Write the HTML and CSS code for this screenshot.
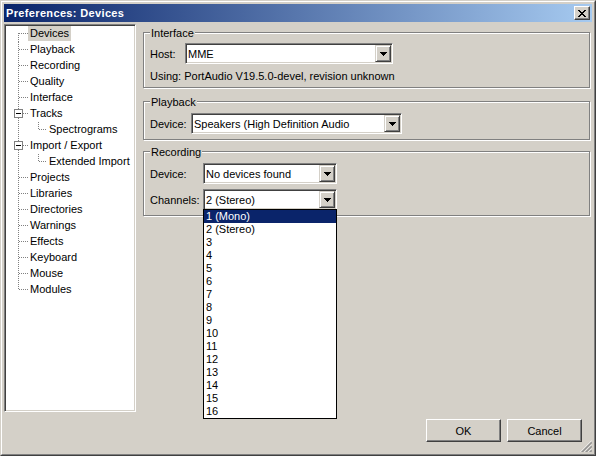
FILE: index.html
```html
<!DOCTYPE html>
<html>
<head>
<meta charset="utf-8">
<title>Preferences: Devices</title>
<link rel="stylesheet" href="styles.css">
</head>
<body>
<div class="window">
  <div class="frame">
    <div class="titlebar">
      <span class="title">Preferences: Devices</span>
      <span class="close"><svg width="8" height="7" viewBox="0 0 8 7" shape-rendering="crispEdges"><path d="M0 0h2v1H0z M6 0h2v1H6z M1 1h2v1H1z M5 1h2v1H5z M2 2h4v1H2z M3 3h2v1H3z M2 4h4v1H2z M1 5h2v1H1z M5 5h2v1H5z M0 6h2v1H0z M6 6h2v1H6z"/></svg></span>
    </div>
    <div class="client">
      <div class="main">
        <div class="tree">
          <div class="row first"><span class="g"></span><span class="t sel">Devices</span></div>
          <div class="row"><span class="g"></span><span class="t">Playback</span></div>
          <div class="row"><span class="g"></span><span class="t">Recording</span></div>
          <div class="row"><span class="g"></span><span class="t">Quality</span></div>
          <div class="row"><span class="g"></span><span class="t">Interface</span></div>
          <div class="row"><span class="g"><span class="box"><span class="minus"></span></span></span><span class="t">Tracks</span></div>
          <div class="row child"><span class="g"></span><span class="t">Spectrograms</span></div>
          <div class="row"><span class="g"><span class="box"><span class="minus"></span></span></span><span class="t">Import / Export</span></div>
          <div class="row child"><span class="g"></span><span class="t">Extended Import</span></div>
          <div class="row"><span class="g"></span><span class="t">Projects</span></div>
          <div class="row"><span class="g"></span><span class="t">Libraries</span></div>
          <div class="row"><span class="g"></span><span class="t">Directories</span></div>
          <div class="row"><span class="g"></span><span class="t">Warnings</span></div>
          <div class="row"><span class="g"></span><span class="t">Effects</span></div>
          <div class="row"><span class="g"></span><span class="t">Keyboard</span></div>
          <div class="row"><span class="g"></span><span class="t">Mouse</span></div>
          <div class="row last"><span class="g"></span><span class="t">Modules</span></div>
        </div>
        <div class="panel">
          <section class="group g-interface">
            <div class="group-title"><span>Interface</span></div>
            <div class="field">
              <span class="label l-host">Host:</span>
              <div class="combo w-host"><span class="value">MME</span><span class="arrow"><svg width="7" height="4" viewBox="0 0 7 4" shape-rendering="crispEdges"><path d="M0 0h7v1H0z M1 1h5v1H1z M2 2h3v1H2z M3 3h1v1H3z"/></svg></span></div>
            </div>
            <div class="info">Using: PortAudio V19.5.0-devel, revision unknown</div>
          </section>
          <section class="group g-playback">
            <div class="group-title"><span>Playback</span></div>
            <div class="field">
              <span class="label l-play">Device:</span>
              <div class="combo w-play"><span class="value">Speakers (High Definition Audio</span><span class="arrow"><svg width="7" height="4" viewBox="0 0 7 4" shape-rendering="crispEdges"><path d="M0 0h7v1H0z M1 1h5v1H1z M2 2h3v1H2z M3 3h1v1H3z"/></svg></span></div>
            </div>
          </section>
          <section class="group g-recording">
            <div class="group-title"><span>Recording</span></div>
            <div class="field">
              <span class="label l-rec">Device:</span>
              <div class="combo w-rec"><span class="value">No devices found</span><span class="arrow"><svg width="7" height="4" viewBox="0 0 7 4" shape-rendering="crispEdges"><path d="M0 0h7v1H0z M1 1h5v1H1z M2 2h3v1H2z M3 3h1v1H3z"/></svg></span></div>
            </div>
            <div class="field gap">
              <span class="label l-rec">Channels:</span>
              <div class="combo w-rec open"><span class="value">2 (Stereo)</span><span class="arrow"><svg width="7" height="4" viewBox="0 0 7 4" shape-rendering="crispEdges"><path d="M0 0h7v1H0z M1 1h5v1H1z M2 2h3v1H2z M3 3h1v1H3z"/></svg></span>
                <ul class="list">
                  <li class="hl">1 (Mono)</li>
                  <li>2 (Stereo)</li>
                  <li>3</li>
                  <li>4</li>
                  <li>5</li>
                  <li>6</li>
                  <li>7</li>
                  <li>8</li>
                  <li>9</li>
                  <li>10</li>
                  <li>11</li>
                  <li>12</li>
                  <li>13</li>
                  <li>14</li>
                  <li>15</li>
                  <li>16</li>
                </ul>
              </div>
            </div>
          </section>
        </div>
      </div>
      <div class="footer">
        <button class="btn">OK</button>
        <button class="btn">Cancel</button>
      </div>
      <svg class="grip" width="12" height="12" viewBox="0 0 12 12">
        <g stroke-width="1">
          <line x1="12" y1="0.5" x2="0.5" y2="12" stroke="#ffffff"/>
          <line x1="12" y1="1.5" x2="1.5" y2="12" stroke="#808080"/>
          <line x1="12" y1="2.5" x2="2.5" y2="12" stroke="#808080"/>
          <line x1="12" y1="4.5" x2="4.5" y2="12" stroke="#ffffff"/>
          <line x1="12" y1="5.5" x2="5.5" y2="12" stroke="#808080"/>
          <line x1="12" y1="6.5" x2="6.5" y2="12" stroke="#808080"/>
          <line x1="12" y1="8.5" x2="8.5" y2="12" stroke="#ffffff"/>
          <line x1="12" y1="9.5" x2="9.5" y2="12" stroke="#808080"/>
          <line x1="12" y1="10.5" x2="10.5" y2="12" stroke="#808080"/>
        </g>
      </svg>
    </div>
  </div>
</div>
</body>
</html>
```

FILE: styles.css
```css
* { box-sizing: border-box; }
html, body { margin: 0; padding: 0; }
body {
  width: 596px;
  height: 456px;
  overflow: hidden;
  background: #d4d0c8;
  font-family: "Liberation Sans", Arial, sans-serif;
  font-size: 11px;
  color: #000;
}
.window {
  width: 596px;
  height: 456px;
  border: 1px solid;
  border-color: #d4d0c8 #404040 #404040 #d4d0c8;
  background: #d4d0c8;
}
.frame {
  height: 100%;
  border: 1px solid;
  border-color: #ffffff #808080 #808080 #ffffff;
  padding: 2px;
  display: flex;
  flex-direction: column;
}
.titlebar {
  flex: none;
  height: 18px;
  display: flex;
  align-items: center;
  justify-content: space-between;
  padding-left: 2px;
  padding-right: 2px;
  background: linear-gradient(to right, #0a246a, #a6caf0);
}
.title {
  color: #fff;
  font-weight: bold;
  font-size: 11px;
  line-height: 13px;
  letter-spacing: 0.35px;
}
.close {
  width: 16px;
  height: 14px;
  background: #d4d0c8;
  border: 1px solid;
  border-color: #ffffff #404040 #404040 #ffffff;
  box-shadow: inset -1px -1px 0 #808080;
  display: flex;
  align-items: center;
  justify-content: center;
}
.close svg { display: block; fill: #000; }

.client {
  flex: 1;
  display: flex;
  flex-direction: column;
  position: relative;
}
.main {
  flex: none;
  display: flex;
}

/* tree */
.tree {
  --v: repeating-linear-gradient(to bottom, #808080 0 1px, transparent 1px 2px);
  --h: repeating-linear-gradient(to right, #808080 0 1px, transparent 1px 2px);
  flex: none;
  width: 132px;
  height: 388px;
  margin-top: 2px;
  background: #fff;
  border: 1px solid;
  border-color: #808080 #ffffff #ffffff #808080;
  box-shadow: inset 1px 1px 0 #404040, inset -1px -1px 0 #d4d0c8;
  padding: 1px;
}
.row {
  display: flex;
  height: 16px;
}
.g {
  flex: none;
  width: 22px;
  height: 16px;
  background-image: var(--v), var(--h);
  background-repeat: no-repeat;
  background-size: 1px 16px, 9px 1px;
  background-position: 12px 0, 13px 7px;
}
.first .g {
  background-size: 1px 9px, 9px 1px;
  background-position: 12px 7px, 13px 7px;
}
.last .g {
  background-size: 1px 8px, 9px 1px;
  background-position: 12px 0, 13px 7px;
}
.child .g {
  width: 41px;
  background-image: var(--v), var(--v), var(--h);
  background-size: 1px 16px, 1px 8px, 8px 1px;
  background-position: 12px 0, 32px 0, 33px 7px;
}
.box {
  display: flex;
  align-items: center;
  justify-content: center;
  width: 9px;
  height: 9px;
  margin: 3px 0 0 8px;
  background: #fff;
  border: 1px solid #808080;
}
.minus {
  width: 5px;
  height: 1px;
  background: #000;
}
.t {
  height: 15px;
  line-height: 15px;
  padding: 0 2px;
  white-space: nowrap;
}
.sel { background: #d4d0c8; }

/* panel */
.panel {
  flex: 1;
  min-width: 0;
  padding: 10px 2px 0 7px;
}
.group {
  border: 1px solid #808080;
  box-shadow: inset 1px 1px 0 #fff, 1px 1px 0 #fff;
  padding: 0 6px 5px 6px;
}
.group-title {
  margin: -6px 0 0 0;
  height: 12px;
  line-height: 13px;
}
.group-title span {
  display: inline-block;
  background: #d4d0c8;
  padding: 0 1px 0 1px;
  height: 13px;
  vertical-align: top;
}
.g-interface .field { margin-top: 4px; }
.g-playback { margin-top: 13px; }
.g-playback .group-title + .field,
.g-recording .group-title + .field { margin-top: 5px; }
.g-recording { margin-top: 11px; }
.field {
  display: flex;
  align-items: center;
}
.field.gap { margin-top: 5px; }
.label { flex: none; white-space: nowrap; }
.l-host { width: 35px; }
.l-play { width: 41px; }
.l-rec { width: 53px; }
.info {
  margin-top: 5px;
  height: 13px;
  line-height: 14px;
}

.combo {
  position: relative;
  display: flex;
  height: 21px;
  padding: 1px;
  background: #fff;
  border: 1px solid;
  border-color: #808080 #ffffff #ffffff #808080;
  box-shadow: inset 1px 1px 0 #404040, inset -1px -1px 0 #d4d0c8;
}
.w-host { width: 208px; }
.w-play { width: 211px; }
.w-rec { width: 134px; }
.value {
  flex: 1;
  min-width: 0;
  padding-left: 1px;
  line-height: 18px;
  white-space: nowrap;
  overflow: hidden;
}
.arrow {
  flex: none;
  width: 16px;
  height: 17px;
  background: #d4d0c8;
  border: 1px solid;
  border-color: #d4d0c8 #404040 #404040 #d4d0c8;
  box-shadow: inset 1px 1px 0 #fff, inset -1px -1px 0 #808080;
  display: flex;
  align-items: center;
  justify-content: center;
}
.arrow svg { display: block; fill: #000; }

.list {
  position: absolute;
  top: 100%;
  left: -1px;
  width: 134px;
  margin: 0;
  padding: 0;
  list-style: none;
  background: #fff;
  border: 1px solid #000;
  z-index: 5;
}
.list li {
  height: 13px;
  line-height: 13px;
  padding-left: 2px;
}
.list li.hl {
  background: #0a246a;
  color: #fff;
}

/* footer */
.footer {
  flex: none;
  display: flex;
  justify-content: flex-end;
  gap: 6px;
  margin-top: 7px;
  padding-right: 10px;
}
.btn {
  width: 75px;
  height: 23px;
  margin: 0;
  padding: 0;
  font: inherit;
  color: #000;
  background: #d4d0c8;
  border: 1px solid;
  border-color: #ffffff #404040 #404040 #ffffff;
  box-shadow: inset -1px -1px 0 #808080, inset 1px 1px 0 #d4d0c8;
}
.grip {
  position: absolute;
  right: 0;
  bottom: 0;
  display: block;
}
```
